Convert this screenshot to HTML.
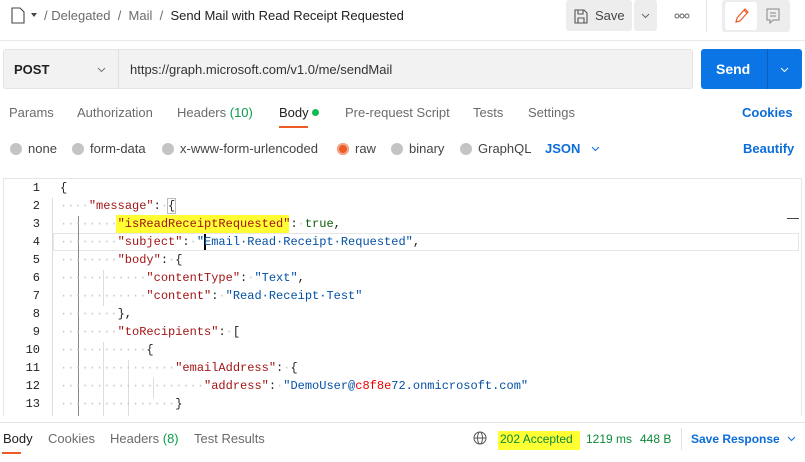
<!DOCTYPE html>
<html><head><style>
*{margin:0;padding:0;box-sizing:border-box}
body{width:805px;height:462px;overflow:hidden;background:#fff;font-family:"Liberation Sans",sans-serif;font-size:13px;color:#212121;position:relative}
.a{position:absolute;white-space:nowrap}
.g{color:#6b6b6b}
.code{font-family:"Liberation Mono",monospace;font-size:12px}
.ln{position:absolute;width:40px;text-align:right;color:#222;font-family:"Liberation Mono",monospace;font-size:12px}
.k{color:#a31515}.s{color:#0451a5}.d{color:#c8c8c8}
.radio{display:inline-block;width:12px;height:12px;border-radius:50%;background:#c4c4c4;vertical-align:-2px;margin-right:6px}
</style></head><body>
<svg class="a" style="left:11px;top:7px" width="28" height="18"><path d="M1 1h8l4 4v11H1z" fill="none" stroke="#444" stroke-width="1.1"/><path d="M20 6l3 4 3-4z" fill="#444"/></svg>
<div class="a" style="left:44px;top:8px;font-size:13px"><span class="g">/ Delegated &nbsp;/ &nbsp;Mail &nbsp;/ </span>&nbsp;<span style="color:#212121">Send Mail with Read Receipt Requested</span></div>
<div class="a" style="left:566px;top:0;width:66px;height:31px;background:#ededed;border-radius:3px"></div>
<svg class="a" style="left:574px;top:9px" width="14" height="15"><path d="M1 1h9l3 3v10H1z M4 1v4h5V1 M4 14v-5h6v5" fill="none" stroke="#555" stroke-width="1.1"/></svg>
<div class="a" style="left:595px;top:8px;color:#444;font-size:13px">Save</div>
<div class="a" style="left:634px;top:0;width:23px;height:31px;background:#ededed;border-radius:3px"></div>
<svg class="a" style="left:641px;top:13px" width="9" height="6"><path d="M1 1l3.5 3.5L8 1" fill="none" stroke="#666"/></svg>
<svg class="a" style="left:674px;top:13px" width="16" height="6"><circle cx="3" cy="3" r="2" fill="none" stroke="#666"/><circle cx="8" cy="3" r="2" fill="none" stroke="#666"/><circle cx="13" cy="3" r="2" fill="none" stroke="#666"/></svg>
<div class="a" style="left:706px;top:0;width:1px;height:32px;background:#e2e2e2"></div>
<div class="a" style="left:722px;top:0;width:68px;height:32px;background:#ededed;border-radius:3px"></div>
<div class="a" style="left:725px;top:2px;width:32px;height:28px;background:#fff;border-radius:3px"></div>
<svg class="a" style="left:733px;top:7px" width="16" height="18"><path d="M3 15l1-4 8-9 3 3-8 9z M11 3l3 3" fill="none" stroke="#ef5b25" stroke-width="1.2"/></svg>
<svg class="a" style="left:766px;top:8px" width="14" height="17"><path d="M1 1h12v11H7l-3 3v-3H1z M4 5h6 M4 8h6" fill="none" stroke="#888" stroke-width="1"/></svg>
<div class="a" style="left:0;top:40px;width:805px;height:1px;background:#e8e8e8"></div>
<div class="a" style="left:3px;top:49px;width:690px;height:40px;background:#f2f2f2;border:1px solid #e4e4e4;border-radius:3px"></div>
<div class="a" style="left:118px;top:50px;width:1px;height:38px;background:#e0e0e0"></div>
<div class="a" style="left:14px;top:62px;font-weight:bold;font-size:13px;color:#212121">POST</div>
<svg class="a" style="left:97px;top:67px" width="9" height="6"><path d="M1 1l3.5 3.5L8 1" fill="none" stroke="#777"/></svg>
<div class="a" style="top:62px;left:130px;font-size:13px;color:#333">https://graph.microsoft.com/v1.0/me/sendMail</div>
<div class="a" style="left:701px;top:49px;width:101px;height:40px;background:#0b75e6;border-radius:3px"></div>
<div class="a" style="left:767px;top:49px;width:1px;height:40px;background:#0a5fbb"></div>
<div class="a" style="left:716px;top:61px;color:#fff;font-weight:bold;font-size:14px">Send</div>
<svg class="a" style="left:780px;top:67px" width="9" height="6"><path d="M1 1l3.5 3.5L8 1" fill="none" stroke="#fff"/></svg>
<div class="a" style="top:105px;left:9px;color:#6b6b6b">Params</div>
<div class="a" style="top:105px;left:77px;color:#6b6b6b">Authorization</div>
<div class="a" style="top:105px;left:177px;color:#6b6b6b">Headers <span style="color:#0a9c4a">(10)</span></div>
<div class="a" style="top:105px;left:279px;color:#212121">Body <span style="display:inline-block;width:7px;height:7px;border-radius:50%;background:#0cbb52;vertical-align:1px"></span></div>
<div class="a" style="left:279px;top:126px;width:29px;height:2px;background:#ef5b25"></div>
<div class="a" style="top:105px;left:345px;color:#6b6b6b">Pre-request Script</div>
<div class="a" style="top:105px;left:473px;color:#6b6b6b">Tests</div>
<div class="a" style="top:105px;left:528px;color:#6b6b6b">Settings</div>
<div class="a" style="top:105px;left:742px;color:#0b6dd9;font-weight:bold">Cookies</div>
<div class="a" style="top:141px;left:10px;color:#444"><span class="radio"></span>none</div>
<div class="a" style="top:141px;left:72px;color:#444"><span class="radio"></span>form-data</div>
<div class="a" style="top:141px;left:162px;color:#444"><span class="radio"></span>x-www-form-urlencoded</div>
<div class="a" style="top:141px;left:337px;color:#444"><span class="radio" style="background:#ef5b25;box-shadow:inset 0 0 0 2px #f2a58a"></span>raw</div>
<div class="a" style="top:141px;left:391px;color:#444"><span class="radio"></span>binary</div>
<div class="a" style="top:141px;left:460px;color:#444"><span class="radio"></span>GraphQL</div>
<div class="a" style="top:141px;left:545px;color:#0b6dd9;font-weight:bold">JSON</div>
<svg class="a" style="left:591px;top:146px" width="9" height="6"><path d="M1 1l3.5 3.5L8 1" fill="none" stroke="#0b6dd9"/></svg>
<div class="a" style="top:141px;left:743px;color:#0b6dd9;font-weight:bold">Beautify</div>
<div class="a" style="left:3px;top:178px;width:799px;height:238px;border:1px solid #e6e6e6;border-bottom:none"></div>
<div class="a" style="left:787px;top:218px;width:12px;height:1px;background:#444"></div>
<div class="a" style="left:53px;top:233px;width:746px;height:18px;border:1px solid #e6e6e6"></div>
<div class="a" style="left:116px;top:215px;width:173px;height:18px;background:#ffff33"></div>
<div class="a" style="left:498px;top:431px;width:82px;height:19px;background:#ffff33"></div>
<div class="a" style="left:52px;top:198px;width:1px;height:218px;background:#ddd"></div>
<div class="a" style="left:78px;top:216px;width:1px;height:200px;background:#888"></div>
<div class="a" style="left:103px;top:270px;width:1px;height:36px;background:#ddd"></div>
<div class="a" style="left:103px;top:342px;width:1px;height:74px;background:#ddd"></div>
<div class="a" style="left:128px;top:360px;width:1px;height:56px;background:#ddd"></div>
<div class="a" style="left:153px;top:378px;width:1px;height:20px;background:#ddd"></div>
<div class="a" style="left:204px;top:234px;width:1.5px;height:16px;background:#000"></div>
<div class="code">
<div class="ln" style="top:181px;left:0">1</div><div class="a code" style="top:181px;left:60px">{</div>
<div class="ln" style="top:199px;left:0">2</div><div class="a code" style="top:199px;left:60px"><span class="d">····</span><span class="k">"message"</span>:<span class="d">·</span><span style="outline:1px solid #bbb">{</span></div>
<div class="ln" style="top:217px;left:0">3</div><div class="a code" style="top:217px;left:60px"><span class="d">········</span><span class="k">"isReadReceiptRequested"</span>:<span class="d">·</span><span style="color:#0b5e0b">true</span>,</div>
<div class="ln" style="top:235px;left:0">4</div><div class="a code" style="top:235px;left:60px"><span class="d">········</span><span class="k">"subject"</span>:<span class="d">·</span><span class="s">"Email·Read·Receipt·Requested"</span>,</div>
<div class="ln" style="top:253px;left:0">5</div><div class="a code" style="top:253px;left:60px"><span class="d">········</span><span class="k">"body"</span>:<span class="d">·</span>{</div>
<div class="ln" style="top:271px;left:0">6</div><div class="a code" style="top:271px;left:60px"><span class="d">············</span><span class="k">"contentType"</span>:<span class="d">·</span><span class="s">"Text"</span>,</div>
<div class="ln" style="top:289px;left:0">7</div><div class="a code" style="top:289px;left:60px"><span class="d">············</span><span class="k">"content"</span>:<span class="d">·</span><span class="s">"Read·Receipt·Test"</span></div>
<div class="ln" style="top:307px;left:0">8</div><div class="a code" style="top:307px;left:60px"><span class="d">········</span>},</div>
<div class="ln" style="top:325px;left:0">9</div><div class="a code" style="top:325px;left:60px"><span class="d">········</span><span class="k">"toRecipients"</span>:<span class="d">·</span>[</div>
<div class="ln" style="top:343px;left:0">10</div><div class="a code" style="top:343px;left:60px"><span class="d">············</span>{</div>
<div class="ln" style="top:361px;left:0">11</div><div class="a code" style="top:361px;left:60px"><span class="d">················</span><span class="k">"emailAddress"</span>:<span class="d">·</span>{</div>
<div class="ln" style="top:379px;left:0">12</div><div class="a code" style="top:379px;left:60px"><span class="d">····················</span><span class="k">"address"</span>:<span class="d">·</span><span class="s">"DemoUser@<span style="color:#e00">c8f8e</span>72.onmicrosoft.com"</span></div>
<div class="ln" style="top:397px;left:0">13</div><div class="a code" style="top:397px;left:60px"><span class="d">················</span>}</div>
</div>
<div class="a" style="left:0;top:422px;width:805px;height:1px;background:#e6e6e6"></div>
<div class="a" style="top:431px;left:3px;color:#212121">Body</div>
<div class="a" style="left:2px;top:452px;width:19px;height:2px;background:#ef5b25"></div>
<div class="a" style="top:431px;left:48px;color:#6b6b6b">Cookies</div>
<div class="a" style="top:431px;left:110px;color:#6b6b6b">Headers <span style="color:#0a9c4a">(8)</span></div>
<div class="a" style="top:431px;left:194px;color:#6b6b6b">Test Results</div>
<svg class="a" style="left:473px;top:431px" width="14" height="14"><circle cx="7" cy="7" r="6" fill="none" stroke="#555"/><ellipse cx="7" cy="7" rx="2.5" ry="6" fill="none" stroke="#555"/><path d="M1 7h12" stroke="#555"/></svg>
<div class="a" style="top:432px;left:500px;color:#0a8a3a;font-size:12px">202 Accepted</div>
<div class="a" style="top:432px;left:586px;color:#0a8a3a;font-size:12px">1219 ms</div>
<div class="a" style="top:432px;left:640px;color:#0a8a3a;font-size:12px">448 B</div>
<div class="a" style="left:681px;top:428px;width:1px;height:22px;background:#e2e2e2"></div>
<div class="a" style="top:432px;left:691px;color:#0b6dd9;font-weight:bold;font-size:12px">Save Response</div>
<svg class="a" style="left:787px;top:436px" width="9" height="6"><path d="M1 1l3.5 3.5L8 1" fill="none" stroke="#0b6dd9"/></svg>
</body></html>
